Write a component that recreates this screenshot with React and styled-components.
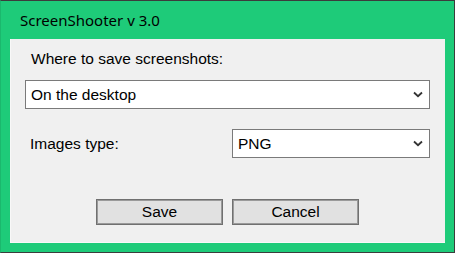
import React from 'react'
import styled, { createGlobalStyle } from 'styled-components'

const Global = createGlobalStyle`
  html, body {
    margin: 0;
    padding: 0;
    background: #3c3c3c;
  }
`

const Window = styled.div`
  box-sizing: border-box;
  width: 455px;
  height: 253px;
  background: #1ecb79;
  border: 1px solid #3c3c3c;
  border-left-color: #1bb86d;
  display: flex;
  flex-direction: column;
  padding: 0 9px 9px 9px;
`

const TitleBar = styled.div`
  height: 38px;
  display: flex;
  align-items: center;
  padding-left: 10px;
  font-family: 'Noto Sans', sans-serif;
  font-size: 15px;
  color: #000;
`

const Panel = styled.div`
  flex: 1;
  background: #f0f0f0;
  border-left: 1px solid #f8f8f8;
  border-bottom: 1px solid #f8f8f8;
  display: flex;
  flex-direction: column;
  padding: 11px 15px 0 14px;
  font-family: 'Liberation Sans', Arial, sans-serif;
  font-size: 15.5px;
  color: #000;
`

const Label = styled.div`
  line-height: 18px;
  padding-left: ${p => p.$indent || 0}px;
`

const Select = styled.div`
  box-sizing: border-box;
  height: 29px;
  width: ${p => (p.$width ? p.$width + 'px' : 'auto')};
  background: #fff;
  border: 1px solid #7a7a7a;
  display: flex;
  align-items: center;
  justify-content: space-between;
  padding: 0 6px 0 5px;
  margin-top: ${p => p.$top || 0}px;
`

const Chevron = () => (
  <svg width="10" height="7" viewBox="0 0 10 7">
    <path d="M1 1.5 L5 5.2 L9 1.5" fill="none" stroke="#333" strokeWidth="1.8" />
  </svg>
)

const Row = styled.div`
  display: flex;
  align-items: center;
  justify-content: space-between;
  margin-top: 20px;
`

const Buttons = styled.div`
  display: flex;
  justify-content: center;
  gap: 9px;
  margin-top: 41px;
`

const Button = styled.button`
  box-sizing: border-box;
  width: 127px;
  height: 26px;
  background: #e1e1e1;
  border: 1px solid #707070;
  box-shadow: inset 0 0 0 1px #9a9a9a;
  font-family: 'Liberation Sans', Arial, sans-serif;
  font-size: 15.5px;
  color: #000;
  padding: 0;
`

export default function App() {
  return (
    <>
      <Global />
      <Window>
        <TitleBar>ScreenShooter v 3.0</TitleBar>
        <Panel>
          <Label $indent={6}>Where to save screenshots:</Label>
          <Select $top={12}>
            <span>On the desktop</span>
            <Chevron />
          </Select>
          <Row>
            <Label $indent={5}>Images type:</Label>
            <Select $width={198}>
              <span>PNG</span>
              <Chevron />
            </Select>
          </Row>
          <Buttons>
            <Button>Save</Button>
            <Button>Cancel</Button>
          </Buttons>
        </Panel>
      </Window>
    </>
  )
}
